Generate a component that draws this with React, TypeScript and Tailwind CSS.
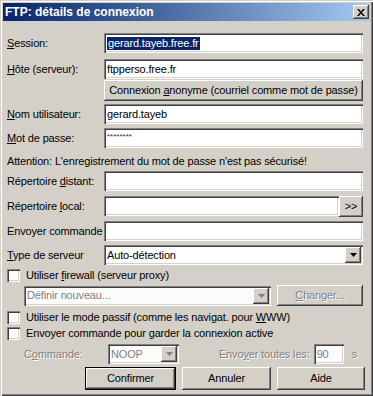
import React from 'react';

const sunken =
  'shadow-[inset_1px_1px_0_#808080,inset_2px_2px_0_#404040,inset_-1px_-1px_0_#ffffff,inset_-2px_-2px_0_#d4d0c8]';
const raised =
  'shadow-[inset_-1px_-1px_0_#404040,inset_1px_1px_0_#ffffff,inset_-2px_-2px_0_#808080,inset_2px_2px_0_#d4d0c8]';
const disabledText = 'text-[#808080] [text-shadow:1px_1px_0_#ffffff]';

function U({ children }: { children: React.ReactNode }) {
  return <span className="underline underline-offset-1">{children}</span>;
}

function Field({ children, className = '' }: { children?: React.ReactNode; className?: string }) {
  return (
    <div className={`h-[20px] bg-white flex items-center pl-[3px] ${sunken} ${className}`}>
      {children}
    </div>
  );
}

function Arrow({ disabled = false }: { disabled?: boolean }) {
  return (
    <div className={`w-[16px] h-[16px] bg-[#d4d0c8] flex items-center justify-center ${raised}`}>
      <svg width="7" height="4" viewBox="0 0 7 4">
        <path d="M0 0h7L3.5 4z" fill={disabled ? '#808080' : '#000'} />
      </svg>
    </div>
  );
}

function Checkbox() {
  return <div className={`w-[13px] h-[13px] bg-white shrink-0 ${sunken}`} />;
}

function Row({ label, children, className = '' }: { label: React.ReactNode; children: React.ReactNode; className?: string }) {
  return (
    <div className={`flex items-center ${className}`}>
      <div className="w-[97px] shrink-0">{label}</div>
      <div className="flex-1">{children}</div>
    </div>
  );
}

export default function App() {
  return (
    <div
      className="w-[373px] h-[396px] bg-[#d4d0c8] text-[11px] text-black leading-none overflow-hidden shadow-[inset_1px_1px_0_#d4d0c8,inset_2px_2px_0_#ffffff,inset_-1px_-1px_0_#404040,inset_-2px_-2px_0_#808080] p-[3px]"
      style={{ fontFamily: '"Liberation Sans", Arial, sans-serif' }}
    >
      {/* title bar */}
      <div className="h-[18px] flex items-center justify-between pl-[2px] pr-[1px] bg-gradient-to-r from-[#0a246a] to-[#a6caf0]">
        <span className="text-white font-bold text-[12px]">FTP: détails de connexion</span>
        <div className={`w-[16px] h-[14px] bg-[#d4d0c8] flex items-center justify-center ${raised}`}>
          <svg width="8" height="7" viewBox="0 0 8 7">
            <path d="M0 0h2l2 2.5L6 0h2L5 3.5 8 7H6L4 4.5 2 7H0l3-3.5z" fill="#000" />
          </svg>
        </div>
      </div>

      <div className="pl-[4px] pr-[7px] tracking-[-0.15px]">
        <Row className="mt-[12px]" label={<><U>S</U>ession:</>}>
          <Field>
            <span className="bg-[#0a246a] text-white px-[1px] py-[1px]">gerard.tayeb.free.fr</span>
          </Field>
        </Row>
        <Row className="mt-[6px]" label={<><U>H</U>ôte (serveur):</>}>
          <Field>ftpperso.free.fr</Field>
        </Row>
        <Row className="mt-[1px]" label={null}>
          <div className={`h-[21px] bg-[#d4d0c8] flex items-center justify-center ${raised}`}>
            <span>
              Connexion <U>a</U>nonyme (courriel comme mot de passe)
            </span>
          </div>
        </Row>
        <Row className="mt-[3px]" label={<><U>N</U>om utilisateur:</>}>
          <Field>gerard.tayeb</Field>
        </Row>
        <Row className="mt-[4px]" label={<><U>M</U>ot de passe:</>}>
          <Field>
            <span className="text-[8px] tracking-[0px] mt-[-2px] text-[#333]">********</span>
          </Field>
        </Row>
        <div className="mt-[5px] h-[16px] flex items-center">
          Attention: L'enregistrement du mot de passe n'est pas sécurisé!
        </div>
        <Row className="mt-[2px]" label={<>Répertoire <U>d</U>istant:</>}>
          <Field />
        </Row>
        <Row className="mt-[5px]" label={<>Répertoire <U>l</U>ocal:</>}>
          <div className="flex">
            <Field className="flex-1" />
            <div className={`w-[24px] h-[21px] bg-[#d4d0c8] flex items-center justify-center ${raised}`}>
              &gt;&gt;
            </div>
          </div>
        </Row>
        <Row className="mt-[4px]" label="Envoyer commande">
          <Field />
        </Row>
        <Row className="mt-[4px]" label={<><U>T</U>ype de serveur</>}>
          <Field className="justify-between pr-[2px]">
            <span>Auto-détection</span>
            <Arrow />
          </Field>
        </Row>

        <div className="mt-[3px] h-[15px] flex items-center gap-[6px]">
          <Checkbox />
          <span>
            Utiliser <U>f</U>irewall (serveur proxy)
          </span>
        </div>
        <div className="mt-[2px] flex items-center pl-[17px]">
          <div className={`w-[247px] h-[20px] bg-[#fbfbf9] flex items-center justify-between pl-[3px] pr-[2px] ${sunken}`}>
            <span className={disabledText}>Définir nouveau...</span>
            <Arrow disabled />
          </div>
          <div className={`ml-[6px] flex-1 h-[21px] bg-[#d4d0c8] flex items-center justify-center ${raised}`}>
            <span className={disabledText}>
              <U>C</U>hanger...
            </span>
          </div>
        </div>

        <div className="mt-[3px] h-[16px] flex items-center gap-[6px]">
          <Checkbox />
          <span>
            Utiliser le mode passif (comme les navigat. pour <U>W</U>WW)
          </span>
        </div>
        <div className="h-[16px] flex items-center gap-[6px]">
          <Checkbox />
          <span>
            Envoyer commande pour <U>g</U>arder la connexion active
          </span>
        </div>

        <div className={`mt-[3px] flex items-center pl-[17px] ${disabledText}`}>
          <span className="w-[84px]">
            C<U>o</U>mmande:
          </span>
          <div className={`w-[71px] h-[20px] bg-[#fbfbf9] flex items-center justify-between pl-[3px] pr-[2px] ${sunken}`}>
            <span>NOOP</span>
            <Arrow disabled />
          </div>
          <span className="ml-auto mr-[4px]">
            Envo<U>y</U>er toutes les:
          </span>
          <div className={`w-[30px] h-[20px] bg-[#fbfbf9] flex items-center pl-[3px] ${sunken}`}>90</div>
          <span className="ml-[8px] mr-[6px]">s</span>
        </div>

        <div className="mt-[3px] flex justify-end gap-[6px]">
          <div className="w-[91px] h-[23px] border border-black">
            <div className={`w-full h-full bg-[#d4d0c8] flex items-center justify-center ${raised}`}>Confirmer</div>
          </div>
          <div className={`w-[89px] h-[23px] bg-[#d4d0c8] flex items-center justify-center ${raised}`}>Annuler</div>
          <div className={`w-[88px] h-[23px] bg-[#d4d0c8] flex items-center justify-center mr-[-2px] ${raised}`}>Aide</div>
        </div>
      </div>
    </div>
  );
}
